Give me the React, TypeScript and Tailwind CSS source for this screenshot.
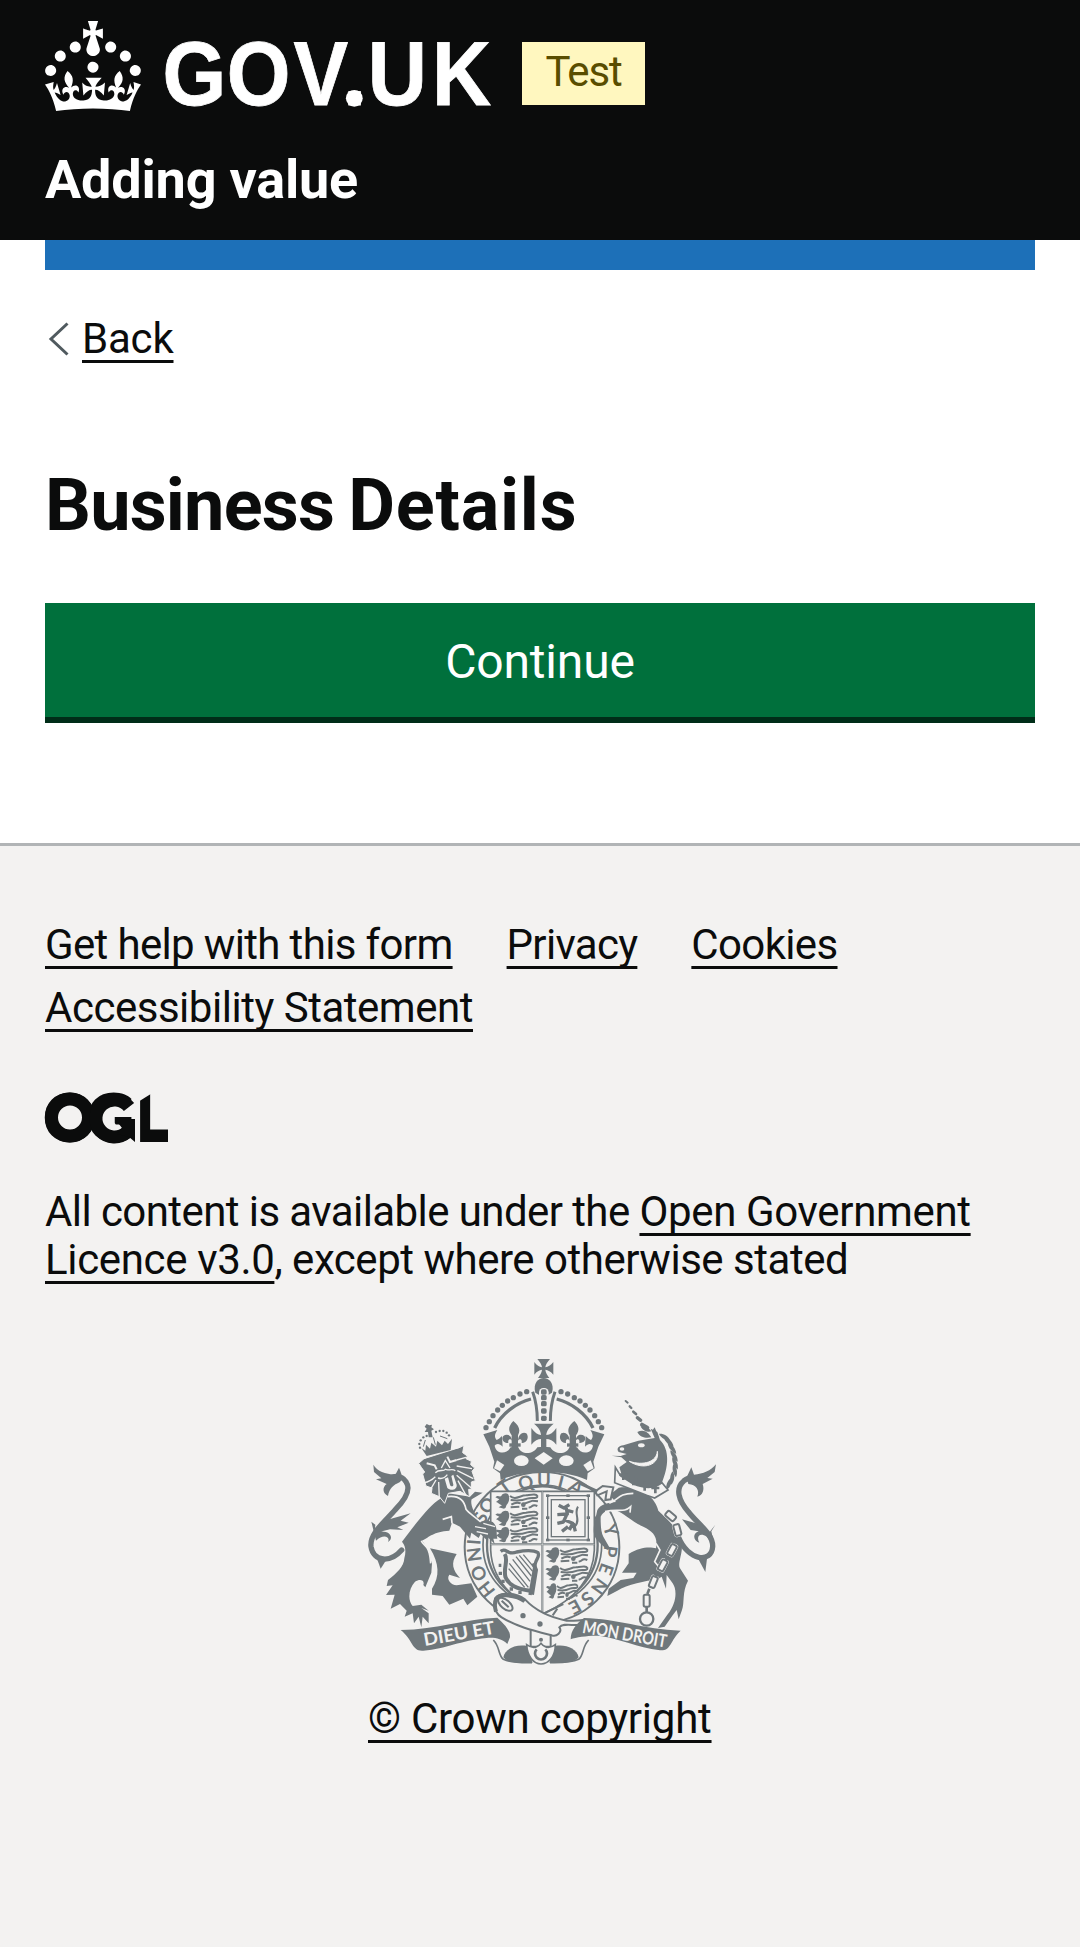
import type { ReactNode } from "react";

const INK = "#6f777b";
const PAPER = "#f3f2f1";

function Link({ children, className = "" }: { children: ReactNode; className?: string }) {
  return (
    <a
      href="#"
      className={`underline decoration-[3px] underline-offset-[7px] [text-decoration-skip-ink:none] ${className}`}
    >
      {children}
    </a>
  );
}

function GovUkLogo() {
  return (
    <svg width="450" height="90" viewBox="0 0 450 90" fill="white" aria-label="GOV.UK" className="block overflow-visible">
      <g transform="scale(3)">
        <path
          fillRule="evenodd"
          clipRule="evenodd"
          d="M22.6 10.4c-1 .4-2-.1-2.4-1-.4-.9.1-2 1-2.4.9-.4 2 .1 2.4 1s-.1 2-1 2.4m-5.9 6.7c-.9.4-2-.1-2.4-1-.4-.9.1-2 1-2.4.9-.4 2 .1 2.4 1s-.1 2-1 2.4m10.8-3.7c-1 .4-2-.1-2.4-1-.4-.9.1-2 1-2.4.9-.4 2 .1 2.4 1s0 2-1 2.4m3.3 4.8c-1 .4-2-.1-2.4-1-.4-.9.1-2 1-2.4.9-.4 2 .1 2.4 1s-.1 2-1 2.4M17 4.7l2.3 1.2V2.5l-2.3.7-.2-.2.9-3h-3.4l.9 3-.2.2c-.1.1-2.3-.7-2.3-.7v3.4L15 4.7c.1.1.1.2.2.2l-1.3 4c-.1.2-.1.4-.1.6 0 1.1.8 2 1.9 2.2h.7c1-.2 1.9-1.1 1.9-2.1 0-.2 0-.4-.1-.6l-1.3-4c-.1-.2 0-.2.1-.3m-7.6 5.700c.9.4 2-.1 2.4-1 .4-.9-.1-2-1-2.4-.9-.4-2 .1-2.4 1s0 2 1 2.4m-5 3c.9.4 2-.1 2.4-1 .4-.9-.1-2-1-2.4-.9-.4-2 .1-2.4 1s.1 2 1 2.4m-3.2 4.8c.9.4 2-.1 2.4-1 .4-.9-.1-2-1-2.4-.9-.4-2 .1-2.4 1s0 2 1 2.4m14.8 11c4.4 0 8.6.3 12.3.8 1.1-4.5 2.4-7 3.7-8.8l-2.5-.9c.2 1.3.3 1.9 0 2.7-.4-.4-.8-1.1-1.1-2.3l-1.2 4c.7-.5 1.3-.8 2-.9-1.1 2.5-2.6 3.1-3.5 3-1.1-.2-1.7-1.2-1.5-2.1.3-1.2 1.5-1.5 2.1-.1 1.1-2.3-.8-3-2-2.3 1.9-1.9 2.1-3.5.6-5.600-2.1 1.6-2.1 3.2-1.2 5.5-1.2-1.4-3.2-.6-2.5 1.6.9-1.4 2.1-.5 1.9.8-.2 1.1-1.7 2.1-3.5 1.9-2.7-.2-2.9-2.1-2.9-3.6.7-.1 1.9.5 2.9 1.9l.4-4.3c-1.1 1.1-2.1 1.4-3.2 1.4.4-1.2 2.1-3 2.1-3h-5.4s1.7 1.9 2.1 3c-1.1 0-2.1-.2-3.2-1.4l.4 4.3c1-1.4 2.2-2 2.9-1.9-.1 1.5-.2 3.4-2.9 3.6-1.9.2-3.4-.8-3.5-1.9-.2-1.3 1-2.2 1.9-.8.7-2.3-1.2-3-2.5-1.6.9-2.2.9-3.9-1.2-5.5-1.5 2-1.3 3.7.6 5.6-1.2-.7-3.1 0-2 2.3.6-1.4 1.8-1.1 2.1.1.2.9-.3 1.9-1.5 2.1-.9.2-2.4-.5-3.5-3 .6 0 1.2.3 2 .9l-1.2-4c-.3 1.1-.7 1.9-1.1 2.3-.3-.8-.2-1.4 0-2.700l-2.9.9C1.3 23 2.6 25.5 3.7 30c3.7-.5 7.9-.8 12.3-.8"
        />
      </g>
      <text
        transform="translate(0 84) scale(.9 1)"
        x="130.500 202 276 331.500 358.500 430"
        y="0"
        fontFamily="Liberation Sans, sans-serif"
        fontWeight="700"
        fontSize="91"
        stroke="white"
        strokeWidth=".8"
      >
        GOV.UK
      </text>
      <circle cx="309.3" cy="77.3" r="8.4" />
    </svg>
  );
}

function OglLogo() {
  return (
    <svg width="123" height="51" viewBox="0 0 123 51" fill="#0b0c0c" aria-label="Open Government Licence" className="block overflow-visible">
      <text x="-2.500 41 90" y="50" fontFamily="Lato, sans-serif" fontWeight="900" fontSize="67">
        OGL
      </text>
      <circle cx="25" cy="25.5" r="18.5" fill="none" stroke="#0b0c0c" strokeWidth="13" />
      <path d="M84 15 A18.500 18.500 0 1 0 82 40" fill="none" stroke="#0b0c0c" strokeWidth="13" />
      <rect x="90" y="-4" width="5" height="58" fill={PAPER} />
      <path d="M94.500 9 V-2 H109 V0 Z" fill={PAPER} />
      <path d="M70 27 H90 V50 L84 45 L72 42 L77 36 Z" />
      <rect x="107.500" y="30" width="18" height="7.500" fill={PAPER} />
      <rect x="100" y="37.500" width="23" height="12.500" />
      <rect x="123" y="30" width="5" height="22" fill={PAPER} />
    </svg>
  );
}

const LETTERS: [string, number, number, number][] = [
  ["H", 380, 718, -128],
  ["O", 357, 669, -115],
  ["N", 344, 613, -97],
  ["I", 342, 576, -86],
  ["S", 362, 504, -66],
  ["O", 382, 466, -55],
  ["T", 434, 410, -36],
  ["Q", 497, 398, -14],
  ["U", 552, 392, 0],
  ["I", 602, 398, 14],
  ["A", 648, 412, 32],
  ["Y", 752, 540, 72],
  ["P", 750, 604, 98],
  ["E", 738, 657, 110],
  ["N", 718, 709, 126],
  ["S", 682, 745, 140],
  ["E", 645, 770, 152],
];

const ARCH_DOTS = [
  [500, 125], [480, 132], [460, 143], [443, 153], [427, 166], [413, 180], [399, 197], [388, 215], [378, 233],
];

function CrownHalf() {
  return (
    <g>
      {ARCH_DOTS.map(([x, y]) => (
        <circle key={x} cx={x} cy={y} r="8" />
      ))}
      <path d="M513 147 C470 158 425 190 404 234" fill="none" stroke={INK} strokeWidth="10" />
      <path d="M518 125 C527 150 532 180 532 213" fill="none" stroke={INK} strokeWidth="9" />
      <path d="M370 253 L412 240 C404 252 402 262 410 270 C416 268 420 264 426 258 L428 290 C418 278 408 281 404 287 C408 312 440 315 452 292 L475 292 C482 315 520 315 532 292 L552 290 V366 C505 366 460 373 422 390 L420 370 L399 355 L403 335 L388 290 Z" />
      <path d="M460 213 C446 228 443 240 455 256 V300 H474 V256 C482 240 478 228 460 213Z" />
      <path d="M430 258 C440 250 455 255 456 272 C450 264 443 267 445 279 C432 280 422 268 430 258Z" />
      <path d="M499 250 C489 244 475 252 474 272 C480 264 487 267 485 279 C500 280 509 262 499 250Z" />
      <path d="M448 280 H482 V290 H448Z" />
      <ellipse cx="484" cy="332" rx="22" ry="16" fill={PAPER} />
      <path d="M411 331 L433 345 L420 364 L402 355 Z" fill={PAPER} />
    </g>
  );
}

function WalkingLion({ x, y }: { x: number; y: number }) {
  return (
    <g transform={`translate(${x} ${y})`}>
      <path d="M0 8 C8 0 12 8 18 4 C20 -4 32 -6 38 -2 C44 8 42 20 36 28 C30 34 34 40 26 42 L10 38 L20 32 C12 30 8 22 2 22 L12 14Z" />
      <path
        d="M44 4 C60 18 74 2 92 2 C108 0 122 -4 126 4 C128 14 108 8 96 12 C80 18 60 18 46 16 M48 30 C60 22 66 22 76 26 M84 28 L112 18 L128 20 M100 38 C112 40 108 26 126 34"
        fill="none"
        stroke={INK}
        strokeWidth="6"
      />
      <circle cx="84" cy="30" r="7" />
      <path d="M46 38 L72 36 M80 42 L96 42" stroke={INK} strokeWidth="6" />
    </g>
  );
}

function Shield() {
  return (
    <g>
      <ellipse cx="546" cy="592" rx="232" ry="226" fill={PAPER} stroke={INK} strokeWidth="6" />
      <ellipse cx="547" cy="585" rx="178" ry="180" fill={PAPER} stroke={INK} strokeWidth="5" />
      <ellipse cx="547" cy="585" rx="166" ry="176" fill="none" stroke={INK} strokeWidth="7" />
      {LETTERS.map(([c, x, y, r], i) => (
        <text
          key={i}
          transform={`translate(${x} ${y}) rotate(${r})`}
          y="19"
          textAnchor="middle"
          fontFamily="Lato, sans-serif"
          fontWeight="700"
          fontSize="56"
        >
          {c}
        </text>
      ))}
      <path
        d="M392 424 H703 V600 C700 690 640 750 549 792 C455 750 396 690 392 600 Z"
        fill={PAPER}
        stroke={INK}
        strokeWidth="5"
      />
      <path d="M547 424 V790 M392 583 H703" stroke={INK} strokeWidth="6" />
      <path d="M547 424 V790 M392 583 H703" stroke={PAPER} strokeWidth="1.5" />
      <WalkingLion x={406} y={434} />
      <WalkingLion x={406} y={486} />
      <WalkingLion x={406} y={535} />
      <WalkingLion x={556} y={596} />
      <WalkingLion x={556} y={650} />
      <g transform="translate(558 704) scale(.75 1)">
        <WalkingLion x={0} y={0} />
      </g>
      <g fill="none" stroke={INK}>
        <rect x="563" y="437" width="122" height="133" strokeWidth="4" />
        <rect x="574" y="449" width="101" height="111" strokeWidth="4" />
      </g>
      {[563, 624, 685].map((x) =>
        [437, 503, 570].map((y) =>
          x === 624 && y === 503 ? null : <rect key={`${x}-${y}`} x={x - 5} y={y - 4} width="10" height="8" />,
        ),
      )}
      <path
        d="M596 466 L612 474 L628 464 M618 470 L622 492 L592 494 M622 490 L610 516 L592 520 M614 510 L638 520 L628 540 M624 530 L606 544 M640 520 L646 544 M624 482 L640 486"
        fill="none"
        stroke={INK}
        strokeWidth="10"
        strokeLinejoin="round"
      />
      <path d="M644 530 C664 510 640 490 654 470" fill="none" stroke={INK} strokeWidth="6" />
      <g fill="none" stroke={INK}>
        <path d="M422 604 C440 590 440 618 470 606 C500 600 524 602 534 608 C540 620 530 624 526 640 L510 735" strokeWidth="10" />
        <path d="M434 612 C446 630 430 650 436 680 C446 706 470 716 510 722" strokeWidth="12" />
        <path d="M520 640 L528 660 L516 734" strokeWidth="12" />
        <path
          d="M448 640 L505 712 M446 656 L494 712 M458 628 L510 694 M468 620 L514 678 M478 616 L518 664 M490 614 L520 650"
          strokeWidth="4"
        />
        <path d="M424 646 h-8 M426 670 h-10 M434 694 h-10 M454 712 v10 M480 722 v10" strokeWidth="10" />
      </g>
    </g>
  );
}

function Belt() {
  return (
    <g stroke={INK} strokeWidth="6" fill={PAPER}>
      <path d="M512 840 V890 H572 V840 Z" />
      <path d="M405 745 C420 725 470 728 495 748 C520 775 560 800 620 812 C650 816 690 800 672 822 C650 832 610 815 598 832 C608 845 590 862 575 856 C520 842 470 830 425 802 C405 790 400 770 405 745Z" />
      <path d="M408 785 C398 752 412 732 440 736 C470 738 482 744 494 754" fill="none" strokeWidth="12" />
      <ellipse cx="436" cy="763" rx="26" ry="13" transform="rotate(40 436 763)" />
      <path d="M425 752 L446 772" />
      <circle cx="489" cy="797" r="5" fill={INK} />
      <circle cx="540" cy="822" r="5" fill={INK} />
      <circle cx="543" cy="869" r="3" fill={INK} />
      <path d="M552 790 L610 762 M578 796 L592 776" fill="none" />
    </g>
  );
}

function RibbonFold() {
  return (
    <g>
      <path
        d="M400 870 C420 890 414 915 430 928 C455 940 500 938 516 938"
        fill="none"
        stroke={INK}
        strokeWidth="5"
      />
      <path d="M430 922 C436 894 470 882 502 888 L518 938 C480 940 444 940 430 922Z" />
    </g>
  );
}

function Ribbons() {
  return (
    <g>
      <RibbonFold />
      <g transform="translate(1086 0) scale(-1 1)">
        <RibbonFold />
      </g>
      <path
        d="M500 884 C515 895 530 896 543 880 C556 896 571 895 586 884 C586 920 565 942 543 942 C521 942 502 920 500 884Z"
        fill={PAPER}
        stroke={INK}
        strokeWidth="5"
      />
      <path d="M530 898 A18 18 0 1 0 556 898" fill="none" stroke={INK} strokeWidth="8" />
      <path d="M122 840 C230 838 320 806 412 803 C430 820 452 840 450 862 L442 882 C425 866 405 862 380 864 C300 872 260 896 190 902 C155 905 160 870 122 840Z" />
      <path d="M962 842 C850 838 770 806 672 804 C650 820 632 840 632 868 C650 862 690 856 720 858 C780 866 830 892 900 901 C935 903 930 870 962 842Z" />
      <g fill={PAPER} fontFamily="Lato, sans-serif" fontWeight="700">
        <text transform="translate(194 888) rotate(-10)" fontSize="54" textLength="216" lengthAdjust="spacingAndGlyphs">
          DIEU ET
        </text>
        <text transform="translate(665 848) rotate(10)" fontSize="54" textLength="256" lengthAdjust="spacingAndGlyphs">
          MON DROIT
        </text>
      </g>
    </g>
  );
}

function Lion() {
  return (
    <g>
      <g fill="none" stroke={INK} strokeLinecap="round">
        <path d="M125 600 C90 640 40 635 33 590 C28 550 75 515 105 480 C135 450 155 420 138 395 C128 380 112 376 95 382" strokeWidth="16" />
      </g>
      <path d="M40 344 C52 364 75 372 106 374 L117 353 C125 372 130 385 120 396 C100 405 88 415 84 438 C68 430 66 412 80 402 L48 388 L64 385 L42 366Z" />
      <path d="M34 515 L46 524 L44 545 L80 510 L152 490 L122 512 L146 518 L112 532 L130 540 L90 538 L60 545 C92 542 102 565 84 576 C92 560 70 550 48 572Z" />
      <path d="M48 618 L62 656 L84 622Z" />
      <path d="M232 452 C195 480 150 545 126 575 C138 590 138 605 133 625 C132 650 110 670 84 690 L80 708 L98 706 L78 735 L104 734 L92 776 L120 762 L140 782 L134 800 L158 790 L162 820 L176 800 L184 832 L188 800 L206 820 L206 790 L184 774 L206 782 L184 764 L158 768 C142 750 146 715 165 695 C180 685 195 690 190 705 L196 712 L214 668 L216 640 C208 620 210 600 186 572 C210 560 220 545 268 542 L276 518 L300 530 L330 566 L334 548 L356 564 L362 552 L382 572 L382 560 L404 582 L400 566 L412 566 C408 545 414 530 398 516 L378 510 L362 515 C340 490 330 460 335 448 L368 428 L345 425 L330 440 L265 430 Z" />
      <path d="M210 595 L290 612 C272 640 278 660 300 684 L268 674 C258 688 272 704 290 706 L334 700 L352 740 L322 766 L310 746 L268 764 L248 738 L216 734 L216 716 C240 680 238 640 210 595Z" />
      <g fill="none" stroke={PAPER} strokeWidth="5">
        <path d="M184 572 C190 590 208 580 212 640" />
        <path d="M262 440 C290 436 312 445 318 478 C326 490 345 500 362 516" />
        <path d="M248 508 L274 500 L276 520" />
        <path d="M345 530 L378 536 M350 545 L384 552 M370 520 L405 530" strokeWidth="4" />
      </g>
      <path
        d="M176 340 L192 326 L300 292 L312 286 L308 308 L322 318 L318 326 L334 334 L332 344 L344 354 L336 364 L346 392 L334 396 L334 418 L326 418 L328 440 L300 424 L265 430 L254 460 L238 440 L214 430 L216 414 L198 408 L188 372 L194 366 L184 352Z"
        stroke={PAPER}
        strokeWidth="3"
      />
      <g fill="none" stroke={PAPER} strokeWidth="4">
        <path d="M200 340 L224 346 L230 358 M262 320 L270 336 L290 330" strokeWidth="6" />
        <path d="M244 354 L256 332 L270 354" />
        <path d="M226 368 C238 356 250 366 256 358 C264 364 276 354 286 362 M234 384 C246 388 256 382 262 374" />
        <path d="M226 380 C214 392 204 396 192 398 M228 390 L208 424 M236 396 L238 446" />
        <path d="M292 362 L340 386 M290 376 L334 414 M294 392 L318 436 M290 348 L336 356 M290 330 L318 322" />
      </g>
      <path d="M254 386 L262 414 C272 424 292 420 290 404 L280 374 L274 378 L280 404 C280 410 272 410 270 404 L264 382Z" fill={PAPER} />
      <path d="M192 326 L202 316 L272 298 L298 292" fill="none" stroke={PAPER} strokeWidth="4" />
      <path d="M184 294 L200 318 L272 300 L276 266 L264 282 L254 272 L246 286 L232 272 L228 290 L214 278 L210 296 L198 284 L196 302Z" />
      <path d="M200 222 L208 226 L216 224 L214 232 L222 238 L214 242 L218 262 L206 262 L204 246 L194 246 L200 236 L194 230Z" />
      {[[180, 293], [178, 282], [182, 271], [190, 262], [200, 258], [228, 246], [239, 243], [250, 243], [260, 248], [267, 256]].map(
        ([x, y]) => (
          <circle key={`${x}-${y}`} cx={x} cy={y} r="3.5" />
        ),
      )}
      <path d="M190 290 L196 270 M220 262 L226 284 M240 258 L262 266" stroke={INK} strokeWidth="3" />
    </g>
  );
}

function Unicorn() {
  return (
    <g>
      <g fill="none" stroke={INK}>
        <path d="M955 560 C985 635 1055 640 1058 590 C1060 550 1010 520 985 485 C955 450 945 415 972 392 C985 382 995 382 1010 384" strokeWidth="16" />
      </g>
      <path d="M1068 343 L1064 366 L1042 384 L1058 386 L1028 402 C1034 420 1028 436 1012 440 C1020 420 1008 404 985 402 L980 382 L994 352 L1002 374 C1030 372 1052 362 1068 343Z" />
      <path d="M1066 524 L1054 544 L1064 590 L1040 560 C1018 545 1008 562 1018 578 C1000 572 996 552 1016 544 L992 540 L966 508 L1008 520 L1046 550Z" />
      <path d="M1012 622 L1036 666 L1042 618Z" />
      <path d="M748 436 L776 413 C840 405 885 440 895 482 C930 515 962 545 962 570 C975 600 950 640 960 655 L984 692 C966 725 974 760 966 780 L956 808 L950 780 L938 796 L914 830 L894 834 L922 794 C950 760 952 720 938 700 L920 675 L918 716 L905 680 L890 690 C860 690 800 705 772 722 L742 738 L746 716 L782 690 L820 684 L830 668 L786 668 L806 640 L806 612 C840 590 870 590 888 595 C894 560 880 545 850 530 C815 515 790 488 765 480 C745 482 730 482 722 500 C722 520 722 545 730 560 L748 592 L742 600 L716 575 C700 560 700 545 702 525 L712 480 C722 462 745 458 768 456 Z" />
      <g fill="none" stroke={PAPER} strokeWidth="5">
        <path d="M748 460 C775 450 775 430 820 430 M735 485 C775 475 790 490 812 470 L810 488" />
        <path d="M888 580 L900 600 L884 635 L900 655" />
      </g>
      <path d="M706 424 L728 408 L760 412 L752 448 L736 450 L740 424 L712 436Z" fill={PAPER} stroke={INK} strokeWidth="6" />
      <path d="M660 400 L712 424" stroke={INK} strokeWidth="9" />
      <path d="M755 317 L782 318 L800 312 L776 306 C768 296 776 288 790 286 L835 272 L884 264 L872 236 L892 246 L900 270 C930 300 926 350 905 400 L880 430 L790 390 L778 352 L800 336 L784 322Z" />
      <ellipse cx="786" cy="297" rx="7" ry="5" fill={PAPER} />
      <ellipse cx="844" cy="286" rx="10" ry="6" fill={PAPER} />
      <path d="M808 334 C850 348 890 336 892 304 C900 345 850 362 808 334Z" fill={PAPER} stroke={PAPER} strokeWidth="3" />
      {[
        [914, 262, 20], [926, 276, 32], [936, 296, 40], [942, 318, 46], [945, 340, 56], [944, 362, 68], [936, 384, 84], [926, 402, 100],
      ].map(([x, y, r]) => (
        <path
          key={y}
          d="M-20 -4 C-8 -10 8 -8 20 4 C6 8 -10 6 -20 -4Z"
          transform={`translate(${x} ${y}) rotate(${r})`}
        />
      ))}
      <path d="M832 246 C850 236 865 246 874 262 C858 266 840 262 832 246Z M842 230 C855 222 866 234 874 244 C862 248 850 242 842 230Z M878 240 L884 232 L896 262Z" />
      <path
        d="M766 352 L764 398 L860 436 L884 444 L924 420 L906 398 C880 420 850 414 820 402 L782 378 Z"
        fill={PAPER}
        stroke={INK}
        strokeWidth="5"
      />
      {[[790, 374], [820, 390], [854, 406], [886, 414]].map(([x, y]) => (
        <path key={x} d={`M${x} ${y - 12} V${y + 16} M${x - 12} ${y} H${x + 12}`} stroke={INK} strokeWidth="8" />
      ))}
      <g stroke={INK} strokeLinecap="round">
        <path d="M797 153 L803 158" strokeWidth="6" />
        <path d="M809 169 L814 174" strokeWidth="7" />
        <path d="M820 185 L828 192" strokeWidth="8" />
        <path d="M832 203 L842 211" strokeWidth="10" />
        <path d="M846 224 L862 233" strokeWidth="12" />
      </g>
      <g fill={PAPER} stroke={INK} strokeWidth="6">
        {[[932, 498, 40, 32], [952, 540, 75, 34], [936, 600, -62, 34], [908, 646, -62, 34], [880, 696, -68, 34], [860, 752, 90, 36]].map(
          ([x, y, r, w]) => (
            <g key={y} transform={`rotate(${r} ${x} ${y})`}>
              <rect x={x - w / 2 - 4} y={y - 13} width={w + 8} height="26" rx="8" stroke="none" />
              <rect x={x - w / 2} y={y - 9} width={w} height="18" rx="5" />
            </g>
          ),
        )}
        <path d="M944 564 L940 580 M924 618 L918 630 M894 664 L888 678 M868 716 L862 732 M860 770 V786" strokeWidth="8" />
        <circle cx="860" cy="807" r="20" fill="none" strokeWidth="7" />
      </g>
    </g>
  );
}

function RoyalArms() {
  return (
    <svg width="370" height="320" viewBox="0 0 1110 960" fill={INK} className="block" aria-label="Royal coat of arms">
      <Shield />
      <CrownHalf />
      <g transform="translate(1103 0) scale(-1 1)">
        <CrownHalf />
      </g>
      <path d="M526 128 C518 100 535 84 551 84 C567 84 584 100 576 128 L566 134 H536Z" />
      <rect x="537" y="114" width="29" height="102" rx="13" fill={PAPER} />
      {[126, 143, 161, 183, 205].map((y) => (
        <rect key={y} x="543" y={y - 8} width="17" height="16" rx="5" />
      ))}
      <path d="M532 27 H570 C562 36 557 44 556 52 C564 51 572 46 580 36 V74 C572 64 564 60 556 59 C557 68 562 76 568 84 H534 C540 76 545 68 546 59 C538 60 530 64 523 74 V36 C530 46 538 51 546 52 C545 44 540 36 532 27Z" />
      <path d="M522 221 H581 C566 233 560 243 559 255 C570 255 580 248 589 234 V284 C580 272 568 267 559 267 V292 H543 V267 C534 267 524 272 514 284 V234 C524 248 534 255 543 255 C542 243 537 233 522 221Z" />
      <path d="M524 325 L551 306 L578 325 L551 344Z" fill={PAPER} />
      <Lion />
      <Unicorn />
      <Belt />
      <Ribbons />
    </svg>
  );
}

export default function App() {
  return (
    <div className="flex min-h-[1947px] flex-col bg-white font-['Roboto','Noto_Sans',sans-serif] text-[42px] leading-[48px] text-[#0b0c0c]">
      <header className="h-[240px] bg-[#0b0c0c] px-[45px] pt-[21px] text-white">
        <div className="flex items-start">
          <div className="w-[477px]">
            <GovUkLogo />
          </div>
          <strong className="mt-[21px] flex h-[63px] w-[123px] items-center justify-center bg-[#fff7bf] pb-[4px] font-normal tracking-[-1.2px] text-[#594d00]">
            Test
          </strong>
        </div>
        <a href="#" className="mt-[37px] block text-[54px] leading-[64px] font-bold tracking-[-0.2px]">
          Adding value
        </a>
      </header>
      <div className="mx-[45px] h-[30px] bg-[#1d70b8]" />

      <main className="px-[45px]">
        <div className="mt-[45px] flex h-[48px] items-center">
          <svg width="22" height="34" viewBox="0 0 22 34" fill="none" stroke="#505a5f" strokeWidth="3" className="ml-[3px] block">
            <path d="M19.500 1.500 L3 17 L19.500 32.500" />
          </svg>
          <Link className="ml-[12px] tracking-[-0.2px]">Back</Link>
        </div>
        <h1 className="mt-[105px] text-[72px] leading-[75px] font-bold tracking-[-0.8px] [word-spacing:-3px]">
          Business <span className="tracking-[0.8px]">Details</span>
        </h1>
        <button className="mt-[60px] flex h-[120px] w-full items-center justify-center border-b-[6px] border-[#002d18] bg-[#00703c] pt-[2px] text-[48px] leading-[57px] tracking-[-0.2px] text-white">
          Continue
        </button>
      </main>

      <footer className="mt-[120px] grow border-t-[3px] border-[#b1b4b6] bg-[#f3f2f1] px-[45px] pt-[75px]">
        <ul className="flex flex-wrap gap-x-[54px] gap-y-[15px]">
          <li>
            <Link className="tracking-[-0.65px]">Get help with this form</Link>
          </li>
          <li>
            <Link className="tracking-[-0.7px]">Privacy</Link>
          </li>
          <li>
            <Link className="tracking-[-0.65px]">Cookies</Link>
          </li>
          <li>
            <Link className="tracking-[-0.48px]">Accessibility Statement</Link>
          </li>
        </ul>
        <div className="mt-[60px]">
          <OglLogo />
        </div>
        <p className="mt-[45px] tracking-[-0.58px]">
          All content is available under the{" "}
          <Link className="tracking-[-0.35px]">Open Government Licence v3.0</Link>
          <span className="tracking-[-0.48px]">, except where otherwise stated</span>
        </p>
        <div className="mt-[66px] ml-[315px] w-[370px]">
          <RoyalArms />
          <div className="mt-[25px] ml-[8px]">
            <Link className="whitespace-nowrap tracking-[-0.25px]">© Crown copyright</Link>
          </div>
        </div>
      </footer>
    </div>
  );
}
